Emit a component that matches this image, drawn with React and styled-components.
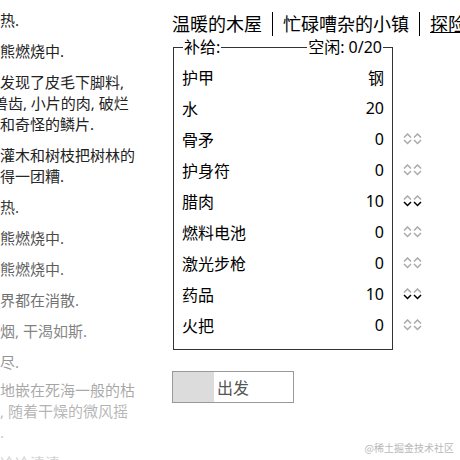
import React from "react";
import styled, { createGlobalStyle } from "styled-components";

const GlobalStyle = createGlobalStyle`
  html, body {
    margin: 0;
    padding: 0;
    background: #fff;
  }
  body {
    width: 460px;
    height: 460px;
    overflow: hidden;
    font-family: "Noto Sans", "Noto Sans CJK SC", sans-serif;
    color: #000;
  }
`;

const Page = styled.div`
  position: relative;
  display: flex;
  width: 460px;
  height: 460px;
  overflow: hidden;
`;

const NotifyColumn = styled.div`
  position: relative;
  flex-shrink: 0;
  width: 172px;
  height: 100%;
  overflow: hidden;
`;

const Notices = styled.div`
  margin-left: -45px;
  padding-top: 10px;
  width: 200px;
`;

const Notice = styled.div`
  margin-bottom: ${(p) => (p.$tight ? "7px" : "10px")};
  font-size: 15px;
  line-height: 21px;
  color: #222;
`;

const NoticeLine = styled.span`
  display: block;
  white-space: nowrap;
`;

const Fade = styled.div`
  position: absolute;
  left: 0;
  right: 0;
  top: 170px;
  bottom: 0;
  background: linear-gradient(rgba(255, 255, 255, 0), rgba(255, 255, 255, 0.8));
`;

const Panel = styled.div`
  display: flex;
  flex-direction: column;
  padding-top: 12px;
  flex-shrink: 0;
`;

const Header = styled.div`
  display: flex;
  white-space: nowrap;
`;

const HeaderButton = styled.div`
  font-size: 18px;
  line-height: 24px;
  padding: 0 10px;
  border-left: 1px solid #000;
  text-decoration: ${(p) => (p.$selected ? "underline" : "none")};
  cursor: pointer;

  &:first-child {
    padding-left: 0;
    border-left: none;
  }
`;

const SupplyBox = styled.div`
  box-sizing: border-box;
  width: 220px;
  margin: 11px 0 0 1px;
  padding: 0 8px 9px;
  border: 1px solid #333;
`;

const Legend = styled.div`
  display: flex;
  justify-content: space-between;
  margin-top: -10px;
  padding: 0 1px;
  font-size: 16px;
  line-height: 18px;
`;

const LegendText = styled.span`
  background: #fff;
  padding: 0 1px;
`;

const Rows = styled.div`
  padding-top: 5px;
`;

const Row = styled.div`
  display: flex;
  align-items: center;
  height: 31px;
  font-size: 16px;
`;

const RowKey = styled.span`
  flex: 1;
`;

const RowVal = styled.span``;

const ArrowSlot = styled.div`
  width: 20px;
  height: 12px;
  margin-left: 19px;
  margin-right: -39px;
  display: flex;
`;

const Embark = styled.div`
  position: relative;
  box-sizing: border-box;
  width: 122px;
  height: 32px;
  margin-top: 21px;
  border: 1px solid #999;
  display: flex;
  align-items: center;
  justify-content: center;
  font-size: 16px;
  color: #555;
  cursor: pointer;
`;

const Cooldown = styled.div`
  position: absolute;
  left: 0;
  top: 0;
  bottom: 0;
  background: #dcdcdc;
`;

const EmbarkLabel = styled.span`
  position: relative;
`;

const Watermark = styled.div`
  position: absolute;
  right: 6px;
  bottom: 5px;
  font-size: 10px;
  color: #b8b8b8;
  font-family: "Noto Sans CJK SC", sans-serif;
`;

const notices = [
  ["房间很热."],
  ["火焰熊熊燃烧中."],
  ["陷阱里发现了皮毛下脚料,", "碎骨, 兽齿, 小片的肉, 破烂", "的布料和奇怪的鳞片."],
  ["散落的灌木和树枝把树林的", "地面弄得一团糟."],
  ["房间很热."],
  ["火焰熊熊燃烧中."],
  ["火焰熊熊燃烧中."],
  ["整个世界都在消散."],
  ["喉咙冒烟, 干渴如斯."],
  ["木柴烧尽."],
  ["孤零零地嵌在死海一般的枯", "草丛中, 随着干燥的微风摇", "曳不定."],
  ["房间里冷冷清清."],
];

const supplies = [
  { name: "护甲", value: "钢" },
  { name: "水", value: "20" },
  { name: "骨矛", value: "0", arrows: true },
  { name: "护身符", value: "0", arrows: true },
  { name: "腊肉", value: "10", arrows: true, down: true },
  { name: "燃料电池", value: "0", arrows: true },
  { name: "激光步枪", value: "0", arrows: true },
  { name: "药品", value: "10", arrows: true, down: true },
  { name: "火把", value: "0", arrows: true },
];

function Arrows({ down }) {
  const off = "#aaa";
  const on = "#000";
  return (
    <svg width="20" height="12" viewBox="0 0 20 12">
      <g fill="none" strokeWidth="1.5" strokeLinejoin="miter">
        <polyline points="1,4.5 4.5,1 8,4.5" stroke={off} />
        <polyline points="11,4.5 14.5,1 18,4.5" stroke={off} />
        <polyline points="1,7 4.5,10.5 8,7" stroke={down ? on : off} />
        <polyline points="11,7 14.5,10.5 18,7" stroke={down ? on : off} />
      </g>
    </svg>
  );
}

export default function App() {
  return (
    <Page>
      <GlobalStyle />
      <NotifyColumn>
        <Notices>
          {notices.map((lines, i) => (
            <Notice key={i} $tight={i === 9}>
              {lines.map((l, j) => (
                <NoticeLine key={j}>{l}</NoticeLine>
              ))}
            </Notice>
          ))}
        </Notices>
        <Fade />
      </NotifyColumn>
      <Panel>
        <Header>
          <HeaderButton>温暖的木屋</HeaderButton>
          <HeaderButton>忙碌嘈杂的小镇</HeaderButton>
          <HeaderButton $selected>探险</HeaderButton>
        </Header>
        <SupplyBox>
          <Legend>
            <LegendText>补给:</LegendText>
            <LegendText>空闲: 0/20</LegendText>
          </Legend>
          <Rows>
            {supplies.map((s) => (
              <Row key={s.name}>
                <RowKey>{s.name}</RowKey>
                <RowVal>{s.value}</RowVal>
                <ArrowSlot>{s.arrows && <Arrows down={s.down} />}</ArrowSlot>
              </Row>
            ))}
          </Rows>
        </SupplyBox>
        <Embark>
          <Cooldown style={{ width: "34%" }} />
          <EmbarkLabel>出发</EmbarkLabel>
        </Embark>
      </Panel>
      <Watermark>@稀土掘金技术社区</Watermark>
    </Page>
  );
}
